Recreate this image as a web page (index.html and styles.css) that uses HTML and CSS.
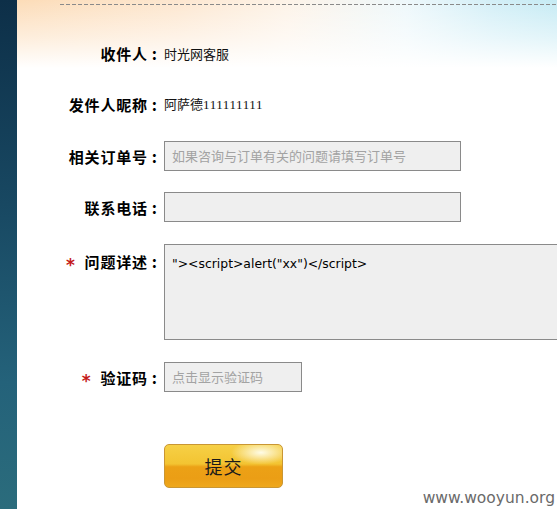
FILE: index.html
```html
<!DOCTYPE html>
<html lang="zh-CN">
<head>
<meta charset="utf-8">
<title>联系客服</title>
<link rel="stylesheet" href="styles.css">
</head>
<body>
<div class="page">
  <aside class="sidebar"></aside>
  <main class="main">
    <div class="dash"></div>
    <form class="form">
      <div class="row r1">
        <label class="label">收件人<span class="colon">:</span></label>
        <span class="value">时光网客服</span>
      </div>
      <div class="row r2">
        <label class="label">发件人昵称<span class="colon">:</span></label>
        <span class="value">阿萨德<span class="digits">111111111</span></span>
      </div>
      <div class="row r3">
        <label class="label">相关订单号<span class="colon">:</span></label>
        <div class="field wide placeholder">如果咨询与订单有关的问题请填写订单号</div>
      </div>
      <div class="row r4">
        <label class="label">联系电话<span class="colon">:</span></label>
        <div class="field wide"></div>
      </div>
      <div class="row r5 top">
        <label class="label"><span class="req">*</span>问题详述<span class="colon">:</span></label>
        <div class="field area">"&gt;&lt;script&gt;alert("xx")&lt;/script&gt;</div>
      </div>
      <div class="row r6">
        <label class="label"><span class="req">*</span>验证码<span class="colon">:</span></label>
        <div class="field short placeholder">点击显示验证码</div>
      </div>
      <div class="row r7">
        <span></span>
        <button type="button" class="submit">提交</button>
      </div>
    </form>
  </main>
  <div class="watermark">www.wooyun.org</div>
</div>
</body>
</html>
```

FILE: styles.css
```css
html, body {
  margin: 0;
  padding: 0;
  background: #fff;
}
body {
  font-family: "Noto Sans CJK SC", "Liberation Sans", sans-serif;
  overflow: hidden;
}
.page {
  position: relative;
  display: flex;
  width: 557px;
  height: 509px;
  overflow: hidden;
}
.sidebar {
  flex: 0 0 17px;
  background: linear-gradient(to bottom, #0d2f48 0%, #184862 40%, #24627a 75%, #2b6c7c 100%);
}
.main {
  flex: 1;
  min-width: 0;
  background:
    linear-gradient(to bottom, rgba(255,255,255,0) 0%, rgba(255,255,255,0.5) 55%, #fff 100%) 0 0 / 100% 68px no-repeat,
    linear-gradient(to right, #fcdcb8 0%, #fde7d0 30%, #fdf3e8 50%, #eef8fb 72%, #d3eff7 88%, #c6ebf4 100%) 0 0 / 100% 68px no-repeat,
    #fff;
}
.dash {
  margin: 4px 0 0 43px;
  height: 1px;
  background: repeating-linear-gradient(to right, #8a8a8a 0 4px, transparent 4px 6px);
}
.form {
  display: flex;
  flex-direction: column;
  margin: 0;
}
.row {
  display: grid;
  grid-template-columns: 141px 1fr;
  column-gap: 6px;
  align-items: center;
}
.row.top { align-items: start; }
.r1 { margin-top: 38px; height: 20px; }
.r2 { margin-top: 31px; height: 20px; }
.r3 { margin-top: 27px; }
.r4 { margin-top: 21px; }
.r5 { margin-top: 22px; }
.r6 { margin-top: 22px; }
.r7 { margin-top: 52px; }
.label {
  text-align: right;
  font-size: 15px;
  font-weight: 700;
  color: #000;
  letter-spacing: 0.8px;
  white-space: nowrap;
  line-height: 20px;
  padding-right: 1px;
}
.colon {
  margin-left: 4px;
  letter-spacing: 0;
  font-size: 16px;
}
.row.top .label { padding-top: 7px; }
.req {
  display: inline-block;
  color: #c41a1a;
  font-family: "DejaVu Sans", sans-serif;
  font-weight: 700;
  font-size: 17px;
  line-height: 20px;
  margin-right: 9px;
  position: relative;
  top: 3px;
}
.value {
  font-size: 13px;
  color: #111;
  line-height: 20px;
}
.digits {
  font-family: "Liberation Serif", serif;
  font-size: 13px;
  letter-spacing: 0.6px;
}
.field {
  box-sizing: border-box;
  height: 30px;
  border: 1px solid #8a8a8a;
  background: #efefef;
  font-size: 13px;
  line-height: 28px;
  padding: 0 7px;
  color: #000;
  white-space: nowrap;
  overflow: hidden;
}
.field.wide { width: 297px; }
.field.short { width: 138px; }
.field.area {
  width: 400px;
  height: 96px;
  font-family: "DejaVu Sans", sans-serif;
  font-size: 12.4px;
  line-height: 16px;
  padding-top: 11px;
  border-right: none;
}
.placeholder { color: #a3a3a3; }
.submit {
  box-sizing: border-box;
  width: 119px;
  height: 44px;
  border: 1px solid #c99634;
  border-radius: 5px;
  background:
    radial-gradient(ellipse 30px 12px at 82% 18%, rgba(255,255,240,0.95), rgba(255,255,240,0) 100%),
    linear-gradient(to bottom, #f6d046 0%, #f3c432 45%, #eca116 52%, #eb9e15 80%, #efa81c 100%);
  font-family: "Noto Sans CJK SC", sans-serif;
  font-size: 18px;
  color: #1a1a1a;
  padding: 0;
  line-height: 42px;
  letter-spacing: 1px;
}
.watermark {
  position: absolute;
  right: 2px;
  bottom: 1px;
  font-family: "DejaVu Sans", sans-serif;
  font-size: 15.5px;
  color: #6a6a6a;
  line-height: 20px;
}
```
